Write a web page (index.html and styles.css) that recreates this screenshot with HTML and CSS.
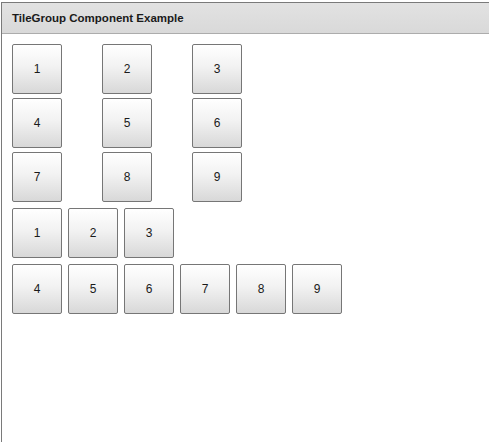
FILE: index.html
```html
<!DOCTYPE html>
<html lang="en">
<head>
    <meta charset="UTF-8">
    <title>TileGroup Component Example</title>
    <link rel="stylesheet" href="styles.css">
</head>
<body>

<div class="panel">
    <div class="panel-title">TileGroup Component Example</div>
    <div class="panel-content">
        <!-- 3x3 tile group -->
        <div class="tile-grid">
            <button class="tile">1</button>
            <button class="tile">2</button>
            <button class="tile">3</button>
            <button class="tile">4</button>
            <button class="tile">5</button>
            <button class="tile">6</button>
            <button class="tile">7</button>
            <button class="tile">8</button>
            <button class="tile">9</button>
        </div>

        <!-- horizontal tile groups -->
        <div class="tile-row">
            <button class="tile">1</button>
            <button class="tile">2</button>
            <button class="tile">3</button>
        </div>
        <div class="tile-row">
            <button class="tile">4</button>
            <button class="tile">5</button>
            <button class="tile">6</button>
            <button class="tile">7</button>
            <button class="tile">8</button>
            <button class="tile">9</button>
        </div>
    </div>
</div>

</body>
</html>
```

FILE: styles.css
```css
html, body {
    margin: 0;
    height: 100%;
    background: #ffffff;
}
body {
    font-family: 'Liberation Sans', Arial, sans-serif;
    padding-top: 2px;
    padding-left: 1px;
    box-sizing: border-box;
}
.panel {
    height: 100%;
    box-sizing: border-box;
    border-top: 1px solid #7a7a7a;
    border-left: 1px solid #7a7a7a;
    background: #ffffff;
}
.panel-title {
    height: 30px;
    line-height: 30px;
    padding-left: 10px;
    font-size: 11.5px;
    font-weight: bold;
    color: #1a1a1a;
    background: linear-gradient(to bottom, #e2e2e2, #d9d9d9);
    border-bottom: 1px solid #acacac;
}
.panel-content {
    padding: 10px;
}
.tile-grid {
    display: grid;
    grid-template-columns: repeat(3, 50px);
    column-gap: 40px;
    row-gap: 4px;
    margin-bottom: 6px;
}
.tile-row {
    display: flex;
    gap: 6px;
    margin-bottom: 6px;
}
.tile {
    width: 50px;
    height: 50px;
    padding: 0;
    margin: 0;
    border: 1px solid #767676;
    border-radius: 2px;
    background: linear-gradient(to bottom, #ffffff 0%, #f2f2f2 45%, #d8d8d8 100%);
    font-family: 'Liberation Sans', Arial, sans-serif;
    font-size: 12px;
    color: #1a1a1a;
    cursor: pointer;
}
```
